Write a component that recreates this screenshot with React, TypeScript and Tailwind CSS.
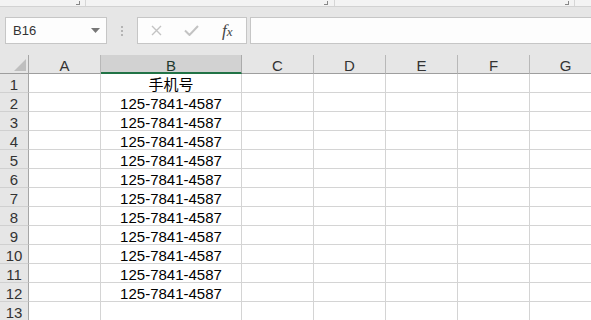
import React from "react";

const FONT = { fontFamily: '"Liberation Sans", "Noto Sans CJK SC", Arial, sans-serif' };

const cols = ["A", "B", "C", "D", "E", "F", "G"];
const colW = ["w-[72px]", "w-[141px]", "w-[72px]", "w-[72px]", "w-[72px]", "w-[72px]", "w-[72px]"];

function HeaderRow() {
  return (
    <div className="flex h-[19px] shrink-0">
      <div className="w-[29px] h-[19px] shrink-0 border-r border-b border-r-[#a6a6a6] border-b-[#9e9e9e] flex items-end justify-end pr-[2px] pb-[2px]">
        <svg width="12" height="12" viewBox="0 0 12 12" className="block">
          <polygon points="12,0 12,12 0,12" fill="#bfbfbf" />
        </svg>
      </div>
      {cols.map((c, i) =>
        c === "B" ? (
          <div
            key={c}
            className={`${colW[i]} h-[19px] shrink-0 bg-[#d2d2d2] border-r border-r-[#ababab] border-b-2 border-b-[#217346] text-center text-[15px] leading-[17px] pt-[2px] text-[#1f3a30]`}
          >
            {c}
          </div>
        ) : (
          <div
            key={c}
            className={`${colW[i]} h-[19px] shrink-0 border-r border-b border-r-[#b8b8b8] border-b-[#9e9e9e] text-center text-[15px] leading-[17px] pt-[2px] text-[#333]`}
          >
            {c}
          </div>
        )
      )}
    </div>
  );
}

function DataRow({ n, value }: { n: number; value?: string }) {
  return (
    <div className="flex h-[19px] shrink-0">
      <div className="w-[29px] h-[19px] shrink-0 bg-[#e6e6e6] border-r border-b border-r-[#a6a6a6] border-b-[#d0d0d0] text-center text-[15px] leading-[17px] pt-[2px] text-[#333]">
        {n}
      </div>
      {cols.map((c, i) => (
        <div
          key={c}
          className={`${colW[i]} h-[19px] shrink-0 bg-white border-r border-b border-[#d4d4d4] text-center text-[15px] leading-[17px] pt-[2px] text-black whitespace-nowrap`}
        >
          {c === "B" ? value : ""}
        </div>
      ))}
    </div>
  );
}

export default function App() {
  const rows: { n: number; v?: string }[] = [{ n: 1, v: "手机号" }];
  for (let i = 2; i <= 12; i++) rows.push({ n: i, v: "125-7841-4587" });
  rows.push({ n: 13 });

  return (
    <div className="w-[591px] h-[320px] overflow-hidden bg-[#e6e6e6] flex flex-col" style={FONT}>
      {/* ribbon bottom strip */}
      <div className="h-[7px] shrink-0 bg-[#f3f3f3] border-b border-[#d2d2d2] flex overflow-hidden text-[12px] text-[#444]">
        <div className="w-[86px] shrink-0 border-r border-[#d6d6d6] flex items-start">
          <span className="ml-[17px] -mt-[11px] leading-[14px]">Format</span>
          <span className="ml-auto mr-[5px] mt-[1px] w-[4px] h-[4px] border-r border-b border-[#888]" />
        </div>
        <div className="w-[249px] shrink-0 border-r border-[#d6d6d6] flex items-start">
          <span className="ml-auto mr-[6px] mt-[1px] w-[4px] h-[4px] border-r border-b border-[#888]" />
        </div>
        <div className="w-[240px] shrink-0 border-r border-[#d6d6d6] flex items-start">
          <span className="ml-[88px] -mt-[11px] leading-[14px]">Number</span>
          <span className="ml-auto mr-[5px] mt-[1px] w-[4px] h-[4px] border-r border-b border-[#888]" />
        </div>
      </div>

      {/* formula bar */}
      <div className="flex items-center h-[48px] shrink-0 pt-[10px] pb-[11px]">
        <div className="ml-[5px] w-[102px] h-[27px] shrink-0 bg-[#fdfdfd] border border-[#c6c6c6] flex items-center pl-[7px] pr-[6px]">
          <span className="text-[13px] text-[#333]">B16</span>
          <svg width="9" height="5" viewBox="0 0 9 5" className="ml-auto">
            <polygon points="0,0 9,0 4.5,5" fill="#777" />
          </svg>
        </div>
        <div className="w-[30px] shrink-0 flex flex-col items-center gap-[2px]">
          <span className="w-[2px] h-[2px] bg-[#b4b4b4]" />
          <span className="w-[2px] h-[2px] bg-[#b4b4b4]" />
          <span className="w-[2px] h-[2px] bg-[#b4b4b4]" />
        </div>
        <div className="w-[110px] h-[27px] shrink-0 bg-[#fdfdfd] border border-[#c6c6c6] flex items-center">
          <svg width="11" height="11" viewBox="0 0 11 11" className="ml-[13px]">
            <path d="M1 1 L10 10 M10 1 L1 10" stroke="#c3c3c3" strokeWidth="1.4" />
          </svg>
          <svg width="15" height="11" viewBox="0 0 15 11" className="ml-[22px]">
            <path d="M1 5.5 L5.5 10 L14 1" stroke="#c3c3c3" strokeWidth="2" fill="none" />
          </svg>
          <span
            className="ml-[23px] text-[17px] italic text-[#444] leading-none"
            style={{ fontFamily: '"Liberation Serif", "DejaVu Serif", serif' }}
          >
            f<span className="text-[13px]">x</span>
          </span>
        </div>
        <div className="ml-[3px] flex-1 h-[27px] bg-[#fdfdfd] border border-r-0 border-[#c6c6c6]" />
      </div>

      {/* grid */}
      <div className="flex flex-col">
        <HeaderRow />
        {rows.map((r) => (
          <DataRow key={r.n} n={r.n} value={r.v} />
        ))}
      </div>
    </div>
  );
}
